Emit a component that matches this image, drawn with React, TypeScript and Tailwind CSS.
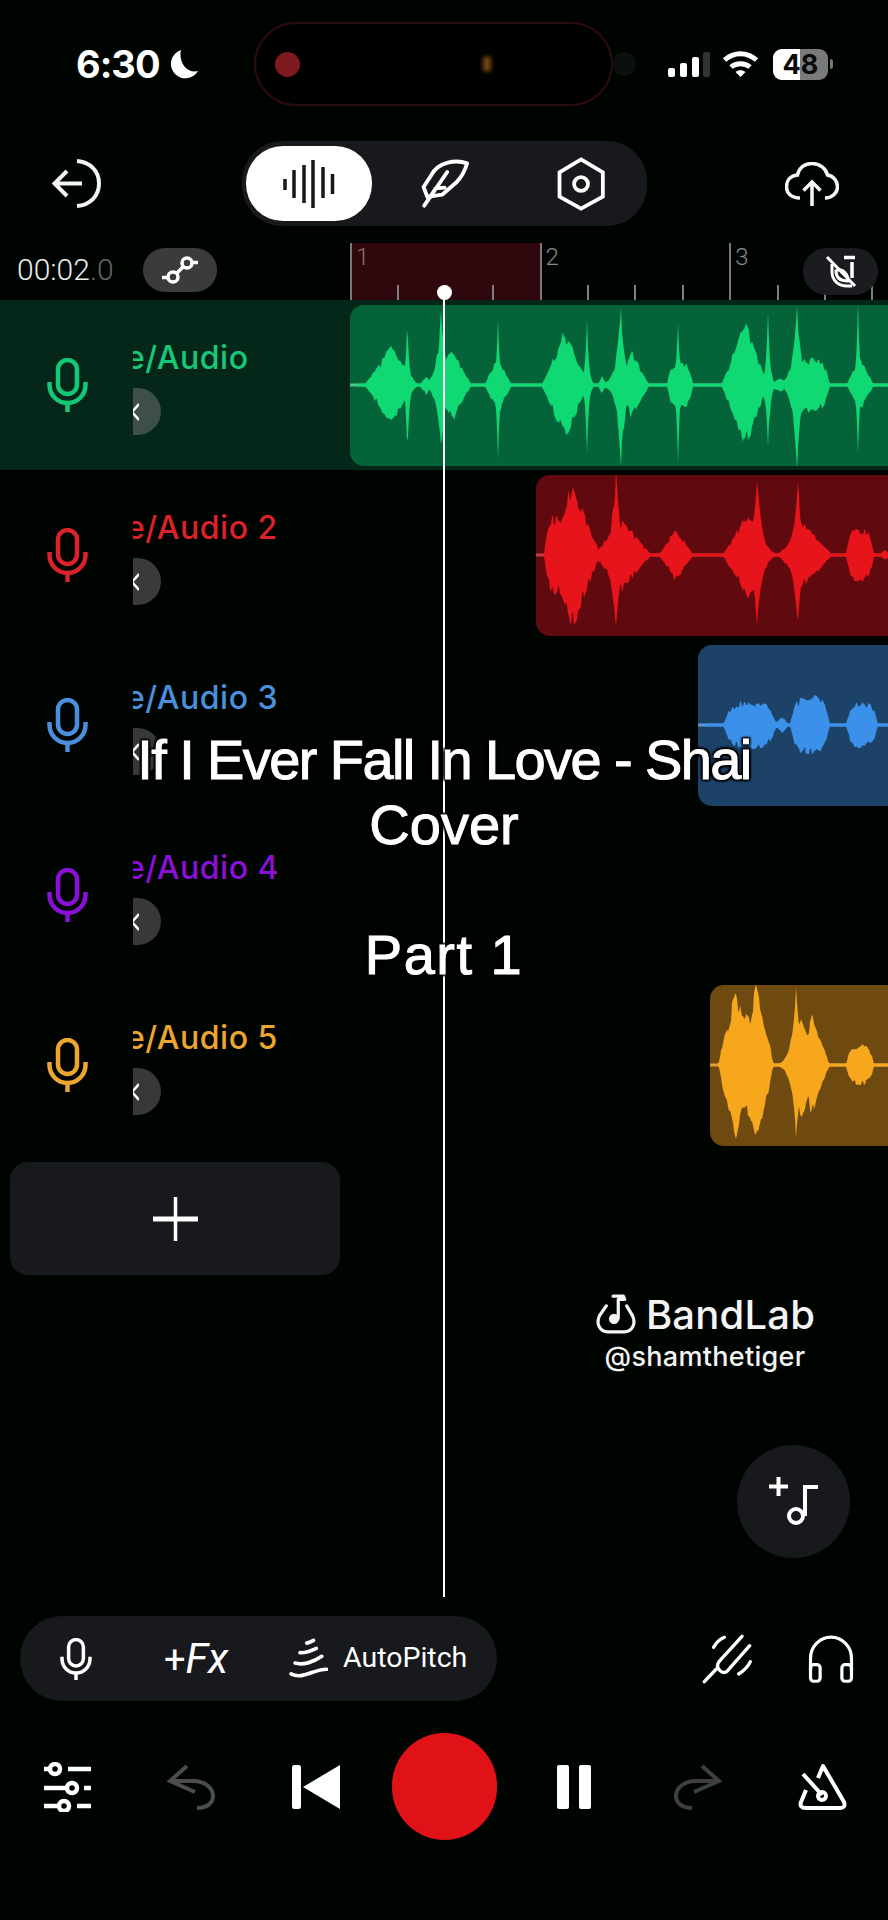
import React from "react";

type C = [number, number, number, string?];

function wavePath(left: number, right: number, cy: number, comps: C[], seed: number) {
  const top: string[] = [];
  const bot: string[] = [];
  const env = (x: number) => {
    let m = 0;
    for (const [c, w, a, k] of comps) {
      const d = Math.abs(x - c);
      let v = 0;
      if (k === "s") v = a * Math.exp(-d / w);
      else if (k === "f") v = d < w ? a * (1 - Math.pow(d / w, 4)) : 0;
      else v = d < w ? a * Math.pow(1 - d / w, 1.05) : 0;
      if (v > m) m = v;
    }
    return m;
  };
  const hash = (k: number) => {
    const v = Math.sin(k * 12.9898 + seed * 78.233) * 43758.5453;
    return v - Math.floor(v);
  };
  const n = (x: number, s: number) => 1 + 0.3 * (hash(Math.floor(x / 2) + s) - 0.5);
  for (let x = left; x <= right; x += 1) {
    const e = env(x);
    top.push(`${x} ${(cy - Math.max(1.5, e * n(x, 0))).toFixed(1)}`);
    bot.unshift(`${x} ${(cy + Math.max(1.5, e * n(x, 31))).toFixed(1)}`);
  }
  return `M${top.join("L")}L${bot.join("L")}Z`;
}

const tracks = [
  {
    name: "e/Audio", text: "text-[#17c878]", stroke: "#14c878", row: "bg-[#04271a]", clip: "bg-[#05633a]", wave: "#10d872", line: "#47c98a",
    pill: "bg-[#3e4f47]", left: 350, cy: 385, seed: 1, clipMl: "ml-0",
    comps: [[391, 27, 36], [407.5, 1.8, 68, "s"], [441, 4.5, 68, "s"], [452, 20, 34], [426, 7, 9], [498, 14, 27], [498, 1.8, 72, "s"], [565, 24, 50], [587, 1.8, 72, "s"], [602, 5, 8], [621, 4.5, 75, "s"], [632, 18, 30], [680, 13, 20, "f"], [678, 1.8, 70, "s"], [745, 24, 58], [768, 2, 70, "s"], [780, 12, 7], [810, 20, 24, "f"], [797, 4.5, 75, "s"], [860, 14, 26], [858, 1.8, 72, "s"]] as C[],
  },
  {
    name: "e/Audio 2", text: "text-[#d9222a]", stroke: "#d9222a", row: "", clip: "bg-[#600a0f]", wave: "#e8141b", line: "#c9383c",
    pill: "bg-[#3a3a3c]", left: 536, cy: 555, seed: 3, clipMl: "ml-[186px]",
    comps: [[573, 28, 66], [560, 16, 36, "f"], [616, 5, 76, "s"], [622, 30, 32], [676, 18, 24], [757, 5, 70, "s"], [748, 26, 40], [798, 4.5, 72, "s"], [805, 28, 28], [860, 14, 24, "f"], [885, 6, 5]] as C[],
  },
  {
    name: "e/Audio 3", text: "text-[#4a8fdc]", stroke: "#4a8fdc", row: "", clip: "bg-[#1d4268]", wave: "#3b90ea", line: "#5a9ad8",
    pill: "bg-[#38383a]", left: 698, cy: 725, seed: 5, clipMl: "ml-[348px]",
    comps: [[750, 27, 21, "f"], [782, 8, 8], [810, 20, 26, "f"], [862, 16, 20, "f"]] as C[],
  },
  {
    name: "e/Audio 4", text: "text-[#8a10d8]", stroke: "#8a10d8", row: "", clip: "", wave: "", line: "",
    pill: "bg-[#38383a]", left: 0, cy: 895, seed: 0, clipMl: "", comps: [] as C[],
  },
  {
    name: "e/Audio 5", text: "text-[#ecA52e]", stroke: "#eca52e", row: "", clip: "bg-[#6f4a10]", wave: "#f6a71c", line: "#dca23c",
    pill: "bg-[#38383a]", left: 710, cy: 1066, seed: 7, clipMl: "ml-[360px]",
    comps: [[736, 18, 72], [756, 18, 72], [746, 27, 48, "f"], [796, 4.5, 75, "s"], [802, 18, 48], [812, 18, 46], [860, 14, 18, "f"]] as C[],
  },
];

function Mic({ color, w = 41, h = 54, sw = 4.5 }: { color: string; w?: number; h?: number; sw?: number }) {
  return (
    <svg width={w} height={h} viewBox="0 0 41 54" fill="none" stroke={color} strokeWidth={sw} className="flex-none">
      <rect x="11" y="2" width="19" height="34" rx="9.5" />
      <path d="M2.5 24v3a18 18 0 0 0 36 0V24" />
      <path d="M20.500 44v10" />
    </svg>
  );
}

function Track({ t }: { t: (typeof tracks)[number] }) {
  return (
    <div className={`flex h-[170px] ${t.row}`}>
      <div className="flex w-[350px] flex-none">
        <div className="flex h-full w-[133px] flex-none items-center pb-px pl-[47px]">
          <Mic color={t.stroke} />
        </div>
        <div className="w-[217px] overflow-hidden pt-[38px]">
          <div className={`-ml-[7px] font-['Inter',sans-serif] text-[32px] leading-[40px] font-medium tracking-[0.5px] whitespace-nowrap ${t.text}`}>{t.name}</div>
          <div className={`mt-[10px] flex h-[47px] w-[28px] items-center rounded-r-full ${t.pill}`}>
            <svg width="6" height="18" viewBox="0 0 6 18" fill="none" stroke="#fff" strokeWidth="2.500">
              <path d="M6 1L-1 9l7 8" />
            </svg>
          </div>
        </div>
      </div>
      {t.comps.length > 0 && (
        <div className="min-w-0 flex-1 pt-[5px]">
          <div className={`h-[161px] overflow-hidden rounded-l-[14px] ${t.clipMl} ${t.clip}`}>
            <svg width={888 - t.left} height={161} viewBox={`${t.left} ${t.cy - 80} ${888 - t.left} 161`}>
              <rect x={t.left} y={t.cy - 1.5} width={888 - t.left} height={3} fill={t.line} />
              <path d={wavePath(t.left + 8, 888, t.cy, t.comps, t.seed)} fill={t.wave} />
            </svg>
          </div>
        </div>
      )}
    </div>
  );
}

function Beat({ i }: { i: number }) {
  const major = i % 4 === 0;
  return (
    <div className={`flex h-full w-[47.4px] flex-none ${i < 4 ? "bg-[#2e080d]" : ""} ${major ? "items-start border-l-2 border-[#7f7477]" : "items-end"}`}>
      {major ? (
        <span className={`pl-[4px] text-[24px] leading-[28px] font-light ${i === 0 ? "text-[#8e6b70]" : "text-[#858b95]"}`}>{i / 4 + 1}</span>
      ) : (
        <div className="h-[15px] w-[2px] bg-[#7f7f7f]" />
      )}
    </div>
  );
}

export default function App() {
  return (
    <div className="relative h-[1920px] w-[888px] overflow-hidden bg-[#000400] font-['Roboto',sans-serif] text-white">
      {/* status bar */}
      <div className="flex h-[128px] items-center pl-[76px]">
        <span className="w-[83px] font-['Inter',sans-serif] text-[38px] leading-none font-bold tracking-[-1px]">6:30</span>
        <svg width="29" height="29" viewBox="0 0 29 29" className="ml-[10px]" fill="#fff">
          <path d="M12 0A14.500 14.500 0 1 0 29 21C19 24 9 13 12 0Z" />
        </svg>
        <div className="ml-[56px] flex h-[84px] w-[359px] flex-none items-center rounded-full border-2 border-[#2e0b10] bg-black pl-[19px]">
          <div className="h-[25px] w-[25px] rounded-full bg-[#7f1a1f]" />
          <div className="ml-[183px] h-[16px] w-[8px] rounded-full bg-[#74480f] blur-[2px]" />
        </div>
        <div className="h-[24px] w-[24px] -translate-x-[1px] rounded-full bg-[#0d0f0d]" />
        <svg width="43" height="27" viewBox="0 0 43 27" className="ml-[30px]" fill="#fff">
          <rect x="1" y="17" width="7" height="9" rx="2" />
          <rect x="13" y="12" width="7" height="14" rx="2" />
          <rect x="25" y="6" width="7" height="20" rx="2" />
          <rect x="36" y="1" width="7" height="25" rx="2" fill="#333" />
        </svg>
        <svg width="37" height="28" viewBox="0 0 37 28" className="ml-[12px]" fill="none" stroke="#fff" strokeWidth="5">
          <path d="M2.500 10C12 1.500 25 1.500 34.500 10" />
          <path d="M9 17C14 12.500 23 12.500 28 17" />
          <path d="M18.500 27l-5-5c3-2.500 7-2.500 10 0z" fill="#fff" stroke="none" />
        </svg>
        <div className="ml-[14px] flex items-center">
          <div className="relative flex h-[31px] w-[55px] flex-none items-center justify-center overflow-hidden rounded-[9px] bg-[#7a7a7a]">
            <div className="absolute inset-y-0 left-0 w-[27px] bg-white" />
            <span className="relative font-['Inter',sans-serif] text-[27px] leading-none font-bold text-[#0a0a0a]">48</span>
          </div>
          <div className="ml-[2px] h-[10px] w-[3px] rounded-r-full bg-[#777]" />
        </div>
      </div>

      {/* toolbar */}
      <div className="mt-[13px] flex h-[85px] items-center pl-[52px]">
        <svg width="49" height="49" viewBox="0 0 49 49" fill="none" stroke="#f4f4f4" strokeWidth="4" className="flex-none">
          <path d="M30 24.500H3M15 12L2.500 24.500L15 37" />
          <path d="M25 2c13 1 22 10 22 22.500S38 46 25 47" />
        </svg>
        <div className="ml-[141px] flex h-[85px] w-[405px] flex-none items-center rounded-[40px] bg-[#18191c] pl-[4px]">
          <div className="flex h-[75px] w-[126px] flex-none items-center justify-center rounded-[37px] bg-white">
            <svg width="52" height="48" viewBox="0 0 52 48" fill="none" stroke="#15171a" strokeWidth="3.500">
              <path d="M2 19v11M11 10v28M21 5v38M30 0v48M40 7v31M49.500 14v20" />
            </svg>
          </div>
          <svg width="48" height="50" viewBox="60 35 150 155" fill="none" stroke="#fff" strokeWidth="12" strokeLinecap="round" strokeLinejoin="round" className="ml-[49px] flex-none">
            <path d="M204 48C170 36 115 42 92 85L68 122L80 153L126 146L170 108C188 90 198 70 204 48Z" />
            <path d="M70 180L142 75M92 148L106 126L134 124" />
          </svg>
          <svg width="49" height="54" viewBox="465 30 155 170" fill="none" stroke="#fff" strokeWidth="12" className="ml-[88px] flex-none">
            <path d="M541 37L610 78V155L541 193L473 155V78Z" />
            <circle cx="541" cy="115" r="22" />
          </svg>
        </div>
        <svg width="54" height="44" viewBox="0 0 54 44" fill="none" stroke="#f6f6f6" strokeWidth="3.500" className="ml-[138px] flex-none">
          <path d="M15 36C6 36 1.500 31 1.500 25C1.500 18 6 13.500 12.500 13C14 5.500 20 1.500 27 1.500C35 1.500 41 6.500 42.500 13C48.500 14 52.500 19 52.500 25C52.500 31 47 36 40 36" />
          <path d="M27 44V20M18.500 28.500L27 20L35.500 28.500" />
        </svg>
      </div>

      {/* timeline */}
      <div className="relative mt-[17px] flex h-[57px] items-start pl-[17px]">
        <div className="flex h-[54px] w-[126px] flex-none items-center">
          <span className="text-[30px] leading-none font-light text-[#ececec]">00:02<span className="text-[#646464]">.0</span></span>
        </div>
        <div className="mt-[5px] flex h-[44px] w-[74px] flex-none items-center justify-center rounded-[22px] bg-[#3b3b3b]">
          <svg width="36" height="30" viewBox="0 0 36 30" fill="none" stroke="#fff" strokeWidth="3.500">
            <circle cx="11" cy="22" r="5" />
            <circle cx="25" cy="8" r="5" />
            <path d="M14.500 18.500L21.500 11.500M0 22.500H6M30 7.500H36" />
          </svg>
        </div>
        <div className="ml-[133px] flex h-full min-w-0 flex-1 overflow-hidden">
          {Array.from({ length: 12 }, (_, i) => (
            <Beat key={i} i={i} />
          ))}
        </div>
        <div className="absolute top-[5px] right-[10px] flex h-[47px] w-[75px] items-center justify-center rounded-[24px] bg-[#1b1c1f]">
          <svg width="32" height="33" viewBox="0 0 32 33" fill="none" stroke="#fff" strokeWidth="3">
            <path d="M2 2L30 31" />
            <path d="M19 2.500H30M27 7V23" strokeWidth="3.500" />
            <path d="M7 9V17C7 26 14 31 22 31H27" />
            <path d="M11 16C11 23 16 26 23 26C23 19 18 14 13 15Z" />
          </svg>
        </div>
      </div>

      {/* tracks */}
      {tracks.map((t) => (
        <Track key={t.name} t={t} />
      ))}

      {/* add track */}
      <div className="mt-[12px] ml-[10px] flex h-[113px] w-[330px] items-center justify-center rounded-[18px] bg-[#18191c]">
        <svg width="45" height="44" viewBox="0 0 45 44" fill="none" stroke="#fff">
          <path d="M22.500 0V44" strokeWidth="3.500" />
          <path d="M0 22H45" strokeWidth="5" />
        </svg>
      </div>

      {/* recording controls */}
      <div className="mt-[341px] flex h-[85px] items-center pl-[20px]">
        <div className="flex h-[85px] w-[477px] flex-none items-center rounded-[42px] bg-[#18191c] pl-[39px]">
          <Mic color="#fff" w={34} h={42} />
          <div className="ml-[71px] flex w-[68px] flex-none items-baseline text-[42px] leading-none font-normal">
            <span className="text-[38px]">+</span>
            <span className="italic">Fx</span>
          </div>
          <svg width="40" height="43" viewBox="45 25 130 140" fill="none" stroke="#fff" strokeWidth="12" strokeLinecap="round" className="ml-[56px] flex-none">
            <path d="M106 45Q118 42 128 36" />
            <path d="M84 76C105 78 120 70 137 62" />
            <path d="M68 110C95 118 130 105 155 88" />
            <path d="M55 145C90 165 130 130 170 130" />
          </svg>
          <span className="ml-[15px] text-[28.500px] leading-none whitespace-nowrap">AutoPitch</span>
        </div>
        <svg width="50" height="50" viewBox="35 25 150 150" fill="none" stroke="#fff" strokeWidth="10" strokeLinecap="round" className="ml-[205px] flex-none">
          <path d="M42 168L78 130" />
          <path d="M155 32L86 108Q76 122 88 134Q100 146 112 135L178 60" />
          <path d="M70 65Q80 45 102 35M145 145Q170 130 180 108" />
        </svg>
        <svg width="48" height="50" viewBox="350 20 150 155" fill="none" stroke="#fff" strokeWidth="10" className="ml-[55px] flex-none">
          <path d="M361 135V95A64 66 0 0 1 489 95V135" />
          <rect x="361" y="115" width="30" height="52" rx="10" />
          <rect x="459" y="115" width="30" height="52" rx="10" />
        </svg>
      </div>

      {/* transport */}
      <div className="mt-[32px] flex h-[107px] items-center pl-[44px]">
        <svg width="47" height="50" viewBox="0 0 47 50" fill="none" stroke="#fff" strokeWidth="4.500" className="flex-none">
          <circle cx="11" cy="7" r="5" />
          <path d="M24 7H47M0 7H5" />
          <circle cx="28" cy="26" r="5" />
          <path d="M0 26H22M40 26H47" />
          <circle cx="20" cy="44" r="5" />
          <path d="M0 44H14M33 44H47" />
        </svg>
        <svg width="48" height="46" viewBox="0 0 48 46" fill="none" stroke="#4c4c4c" strokeWidth="4" className="ml-[76px] flex-none">
          <path d="M20 2L3 17L28 28" />
          <path d="M3 17H26C38 17 46 24 46 32C46 39 40 44 30 44" />
        </svg>
        <svg width="48" height="44" viewBox="0 0 48 44" fill="#fff" className="ml-[77px] flex-none">
          <rect x="0" y="0" width="9" height="44" rx="2.500" />
          <path d="M48 0V44L11 22Z" />
        </svg>
        <div className="ml-[52px] h-[107px] w-[105px] flex-none rounded-full bg-[#e01218]" />
        <svg width="34" height="44" viewBox="0 0 34 44" fill="#fff" className="ml-[60px] flex-none">
          <rect x="0" y="0" width="12" height="44" rx="2" />
          <rect x="22" y="0" width="12" height="44" rx="2" />
        </svg>
        <svg width="48" height="46" viewBox="0 0 48 46" fill="none" stroke="#3f3f3f" strokeWidth="4" className="ml-[83px] flex-none">
          <path d="M28 2L45 17L20 28" />
          <path d="M45 17H22C10 17 2 24 2 32C2 39 8 44 18 44" />
        </svg>
        <svg width="49" height="46" viewBox="0 0 49 46" fill="none" stroke="#fff" strokeWidth="4" strokeLinejoin="round" className="ml-[76px] flex-none">
          <path d="M20 14L25 2L46 38Q48 44 42 44H8Q1 44 3 38L8 26" />
          <path d="M5 10L24 31" />
          <circle cx="24" cy="32" r="4" />
        </svg>
      </div>

      {/* playhead */}
      <div className="absolute top-[292px] left-[443px] h-[1305px] w-[2px] bg-white" />
      <div className="absolute top-[285px] left-[437px] h-[15px] w-[15px] rounded-full bg-white" />

      {/* caption */}
      <div className="absolute top-[727px] left-0 w-[888px] text-center font-['Liberation_Sans',sans-serif] text-[56px] leading-[65px] [-webkit-text-stroke:1px_#fff] [text-shadow:0_0_3px_#000,0_0_3px_#000,2px_2px_2px_#000,-2px_-2px_2px_#000,2px_-2px_2px_#000,-2px_2px_2px_#000]">
        <div className="tracking-[-1.6px] whitespace-nowrap">If I Ever Fall In Love - Shai</div>
        <div>Cover</div>
        <div>&nbsp;</div>
        <div className="tracking-[1.5px]">Part 1</div>
      </div>

      {/* watermark */}
      <div className="absolute top-[1292px] left-[595px] flex w-[220px] flex-col items-center font-['Inter',sans-serif] text-[#f4f4f4]">
        <div className="flex items-center">
          <svg width="42" height="42" viewBox="40 30 130 130" fill="none" stroke="#f4f4f4" strokeWidth="10" strokeLinecap="round" strokeLinejoin="round" className="flex-none">
            <path d="M75 70L54 100C42 125 55 150 80 150H130C155 150 168 125 156 100L138 70" />
            <path d="M96 40H128L132 50H112V108" />
            <circle cx="99" cy="110" r="11" fill="#f4f4f4" />
          </svg>
          <span className="mt-[3px] ml-[9px] text-[40px] leading-[40px] font-medium tracking-[0.2px]">BandLab</span>
        </div>
        <span className="mt-[6px] text-[27px] leading-[32px] font-medium tracking-[0.3px]">@shamthetiger</span>
      </div>

      {/* floating add-loop button */}
      <div className="absolute top-[1445px] left-[737px] flex h-[113px] w-[113px] items-center justify-center rounded-full bg-[#18191c]">
        <svg width="49" height="49" viewBox="0 0 49 49" fill="none" stroke="#fff" strokeWidth="4">
          <path d="M9.500 0V19M0 9.500H19" />
          <circle cx="27" cy="39" r="7" />
          <path d="M36 39V10H49" />
        </svg>
      </div>
    </div>
  );
}
